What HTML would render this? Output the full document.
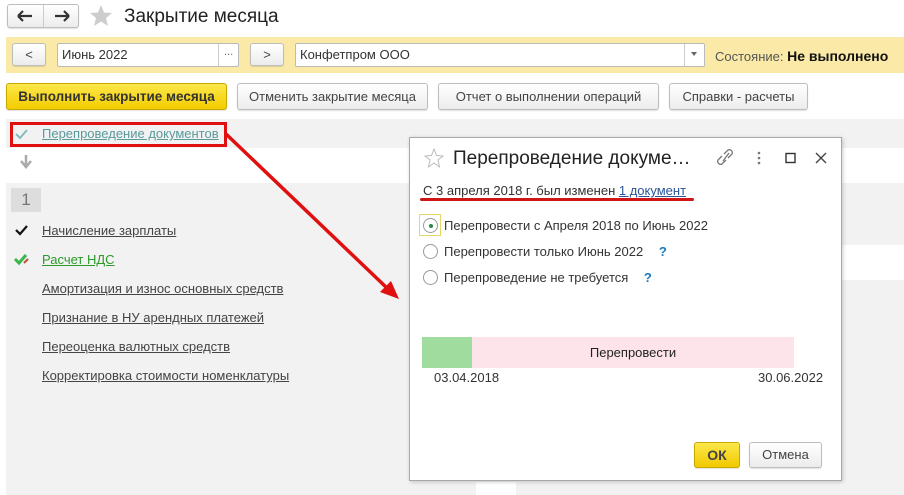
<!DOCTYPE html>
<html><head><meta charset="utf-8"><style>
*{box-sizing:border-box;margin:0;padding:0}
body{width:904px;height:495px;background:#fff;font-family:"Liberation Sans",sans-serif;font-size:13px;color:#333;position:relative;overflow:hidden}
.a{position:absolute}
.btn{position:absolute;border:1px solid #bdbdbd;border-radius:3px;background:linear-gradient(#fff,#ececec);text-align:center;color:#444;font-size:13px;box-shadow:0 1px 1px rgba(0,0,0,.12)}
.inp{position:absolute;border:1px solid #bbb;background:#fff;border-radius:2px;font-size:13px;color:#333;padding-left:4px}
.u{text-decoration:underline;color:#444}
.g{background:#f2f2f2}
</style></head><body>
<!-- header -->
<div class="btn" style="left:7px;top:4px;width:72px;height:24px;border-radius:3px"></div>
<div class="a" style="left:43px;top:5px;width:1px;height:22px;background:#ccc"></div>
<svg class="a" style="left:0;top:0" width="120" height="32">
<path d="M18 16H32M18 16L23 11M18 16L23 21" stroke="#333" stroke-width="2.2" fill="none"/>
<path d="M69 16H55M69 16L64 11M69 16L64 21" stroke="#333" stroke-width="2.2" fill="none"/>
<polygon points="101,5 104,12.5 112,13 106,18 108,26 101,21.5 94,26 96,18 90,13 98,12.5" fill="#cdcdcd"/>
</svg>
<div class="a" style="left:124px;top:6px;font-size:19px;color:#222">Закрытие месяца</div>
<!-- yellow bar -->
<div class="a" style="left:6px;top:37px;width:898px;height:36px;background:#fbeaa7"></div>
<div class="btn" style="left:12px;top:43px;width:34px;height:23px;line-height:21px">&lt;</div>
<div class="inp" style="left:57px;top:43px;width:182px;height:24px;line-height:22px">Июнь 2022</div>
<div class="a" style="left:218px;top:44px;width:1px;height:22px;background:#ccc"></div>
<div class="a" style="left:224px;top:46px;font-size:11px;color:#666">...</div>
<div class="btn" style="left:250px;top:43px;width:34px;height:23px;line-height:21px">&gt;</div>
<div class="inp" style="left:295px;top:43px;width:410px;height:24px;line-height:22px">Конфетпром ООО</div>
<div class="a" style="left:684px;top:44px;width:1px;height:22px;background:#ccc"></div>
<div class="a" style="left:691px;top:52px;width:0;height:0;border-left:3px solid transparent;border-right:3px solid transparent;border-top:4px solid #666"></div>
<div class="a" style="left:715px;top:48px;color:#555">Состояние: <b style="color:#111;font-size:14px">Не выполнено</b></div>
<!-- buttons -->
<div class="btn" style="left:6px;top:83px;width:221px;height:27px;line-height:25px;background:linear-gradient(#fde84a,#f3cc00);border-color:#c9a800;font-weight:bold;color:#333;font-size:13.5px">Выполнить закрытие месяца</div>
<div class="btn" style="left:237px;top:83px;width:191px;height:27px;line-height:25px">Отменить закрытие месяца</div>
<div class="btn" style="left:438px;top:83px;width:221px;height:27px;line-height:25px">Отчет о выполнении операций</div>
<div class="btn" style="left:669px;top:83px;width:139px;height:27px;line-height:25px">Справки - расчеты</div>
<!-- content bg -->
<div class="a g" style="left:6px;top:119px;width:898px;height:29px"></div>
<div class="a g" style="left:6px;top:183px;width:898px;height:312px"></div>
<div class="a" style="left:840px;top:245px;width:64px;height:35px;background:#fff"></div>
<div class="a" style="left:476px;top:482px;width:40px;height:13px;background:#fff"></div>
<svg class="a" style="left:0;top:120px" width="40" height="280">
<path d="M16 14L20 18L27 10" stroke="#8bb" stroke-width="2" fill="none"/>
<path d="M26 35V45M21 41L26 47L31 41" stroke="#aaa" stroke-width="2.5" fill="none"/>
<path d="M16 110L20 114L27 106" stroke="#111" stroke-width="2.2" fill="none"/>
<path d="M15 139L19 143L26 135" stroke="#3bb54a" stroke-width="3" fill="none"/>
<path d="M24 143L28 139" stroke="#c0503a" stroke-width="2"/>
</svg>
<div class="a u" style="left:42px;top:126px;color:#5a9a9a">Перепроведение документов</div>
<div class="a" style="left:10px;top:122px;width:217px;height:25px;border:3px solid #e01010"></div>
<div class="a" style="left:11px;top:188px;width:30px;height:24px;background:#ddd;color:#777;font-size:17px;text-align:center;line-height:24px">1</div>
<div class="a u" style="left:42px;top:223px">Начисление зарплаты</div>
<div class="a u" style="left:42px;top:252px;color:#2a9a2a">Расчет НДС</div>
<div class="a u" style="left:42px;top:281px">Амортизация и износ основных средств</div>
<div class="a u" style="left:42px;top:310px">Признание в НУ арендных платежей</div>
<div class="a u" style="left:42px;top:339px">Переоценка валютных средств</div>
<div class="a u" style="left:42px;top:368px">Корректировка стоимости номенклатуры</div>
<!-- arrow -->
<svg class="a" style="left:0;top:0" width="904" height="495"><line x1="226" y1="134" x2="388" y2="289" stroke="#e01010" stroke-width="3.5"/><polygon points="399,299 380,292 391,281" fill="#e01010"/></svg>
<!-- modal -->
<div class="a" style="left:409px;top:137px;width:433px;height:344px;background:#fff;border:1px solid #a8a8a8;box-shadow:1px 1px 4px rgba(0,0,0,.2)"></div>
<svg class="a" style="left:420px;top:145px" width="420" height="28">
<polygon points="14,4 16.5,10.5 23,11 18,15 19.5,22 14,18 8.5,22 10,15 5,11 11.5,10.5" fill="none" stroke="#bbb" stroke-width="1"/>
<path d="M306 15L302 19a3 3 0 0 1-4-4L302 11M304 9L308 5a3 3 0 0 1 4 4L308 13M303 16L309 8" stroke="#777" stroke-width="1.3" fill="none"/>
<circle cx="339" cy="8" r="1.3" fill="#777"/><circle cx="339" cy="13" r="1.3" fill="#777"/><circle cx="339" cy="18" r="1.3" fill="#777"/>
<rect x="366" y="8.5" width="9" height="9" fill="none" stroke="#333" stroke-width="1.4"/>
<path d="M396 8L406 18M406 8L396 18" stroke="#444" stroke-width="1.4"/>
</svg>
<div class="a" style="left:453px;top:148px;font-size:19px;color:#222">Перепроведение докуме…</div>
<div class="a" style="left:423px;top:183px;color:#333">С 3 апреля 2018 г. был изменен <span style="text-decoration:underline;color:#2a5599">1 документ</span></div>
<div class="a" style="left:420px;top:198px;width:274px;height:3px;background:#d01515;border-radius:2px"></div>
<div class="a" style="left:419px;top:214px;width:22px;height:22px;border:1px solid #e5d76a"></div>
<div class="a" style="left:423px;top:218px;width:15px;height:15px;border:1px solid #999;border-radius:50%"></div>
<div class="a" style="left:429px;top:224px;width:4px;height:4px;background:#2a8a4a;border-radius:50%"></div>
<div class="a" style="left:444px;top:218px">Перепровести с Апреля 2018 по Июнь 2022</div>
<div class="a" style="left:423px;top:244px;width:15px;height:15px;border:1px solid #999;border-radius:50%"></div>
<div class="a" style="left:444px;top:244px">Перепровести только Июнь 2022 <span style="margin-left:12px;color:#1a7ab8;font-weight:bold">?</span></div>
<div class="a" style="left:423px;top:270px;width:15px;height:15px;border:1px solid #999;border-radius:50%"></div>
<div class="a" style="left:444px;top:270px">Перепроведение не требуется <span style="margin-left:12px;color:#1a7ab8;font-weight:bold">?</span></div>
<div class="a" style="left:422px;top:337px;width:50px;height:31px;background:#a0dc9e"></div>
<div class="a" style="left:472px;top:337px;width:322px;height:31px;background:#fde4ea;text-align:center;line-height:31px;color:#222">Перепровести</div>
<div class="a" style="left:434px;top:370px">03.04.2018</div>
<div class="a" style="left:758px;top:370px">30.06.2022</div>
<div class="btn" style="left:694px;top:442px;width:46px;height:26px;line-height:24px;background:linear-gradient(#fde84a,#f1c900);border-color:#c9a800;font-weight:bold;font-size:14px">ОК</div>
<div class="btn" style="left:749px;top:442px;width:73px;height:26px;line-height:24px">Отмена</div>
</body></html>
